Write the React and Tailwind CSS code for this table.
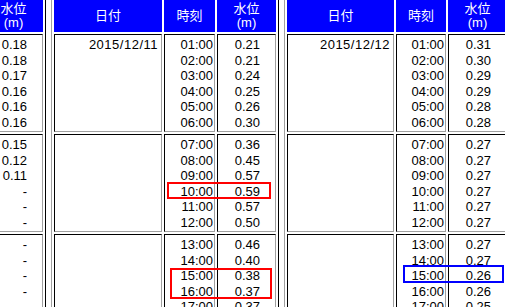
import React from "react";

// 水位データ（1時間ごと、6時間単位でまとめる）
const day11 = [
  [["01:00", "0.21"], ["02:00", "0.21"], ["03:00", "0.24"], ["04:00", "0.25"], ["05:00", "0.26"], ["06:00", "0.30"]],
  [["07:00", "0.36"], ["08:00", "0.45"], ["09:00", "0.57"], ["10:00", "0.59"], ["11:00", "0.57"], ["12:00", "0.50"]],
  [["13:00", "0.46"], ["14:00", "0.40"], ["15:00", "0.38"], ["16:00", "0.37"], ["17:00", "0.37"], ["18:00", "0.36"]],
];

const day12 = [
  [["01:00", "0.31"], ["02:00", "0.30"], ["03:00", "0.29"], ["04:00", "0.29"], ["05:00", "0.28"], ["06:00", "0.28"]],
  [["07:00", "0.27"], ["08:00", "0.27"], ["09:00", "0.27"], ["10:00", "0.27"], ["11:00", "0.27"], ["12:00", "0.27"]],
  [["13:00", "0.27"], ["14:00", "0.27"], ["15:00", "0.26"], ["16:00", "0.26"], ["17:00", "0.25"], ["18:00", "0.25"]],
];

const day10 = [
  ["0.18", "0.18", "0.17", "0.16", "0.16", "0.16"],
  ["0.15", "0.12", "0.11", "-", "-", "-"],
  ["-", "-", "-", "-", "-", "-"],
];

const tableCls =
  "table-fixed border-separate border-spacing-[2px] border border-t-[#a0a0a0] border-l-[#a0a0a0] border-r-black border-b-black";
const thCls =
  "bg-[#0000ff] border border-[#0000ff] text-white font-normal text-center align-middle py-[1px] px-0 leading-[14px]";
const tdCls =
  "border border-t-black border-l-black border-r-[#a0a0a0] border-b-[#a0a0a0] align-top pt-[2px] pb-[1px] px-0";

const Lines = ({ items }) =>
  items.map((t, i) => (
    <div key={i} className="h-[15.5px] leading-[15.5px] whitespace-nowrap">
      {t}
    </div>
  ));

const LevelHead = () => (
  <>
    <div>水位</div>
    <div>(m)</div>
  </>
);

function DayTable({ date, groups, dateW, timeW, levelW }) {
  return (
    <table className={tableCls} style={{ width: dateW + timeW + levelW + 10 }}>
      <thead>
        <tr>
          <th className={thCls} style={{ width: dateW }}>日付</th>
          <th className={thCls} style={{ width: timeW }}>時刻</th>
          <th className={thCls} style={{ width: levelW }}>
            <LevelHead />
          </th>
        </tr>
      </thead>
      <tbody>
        {groups.map((g, i) => (
          <tr key={i}>
            <td className={tdCls + " text-right pr-[3px] tracking-[0.5px]"}>
              {i === 0 && <Lines items={[date]} />}
            </td>
            <td className={tdCls + " text-right pr-[1px]"}>
              <Lines items={g.map((r) => r[0])} />
            </td>
            <td className={tdCls + " text-right pr-[15px]"}>
              <Lines items={g.map((r) => r[1])} />
            </td>
          </tr>
        ))}
      </tbody>
    </table>
  );
}

function LevelOnlyTable({ groups }) {
  return (
    <table className={tableCls + " w-[65px]"}>
      <thead>
        <tr>
          <th className={thCls + " w-[59px]"}>
            <LevelHead />
          </th>
        </tr>
      </thead>
      <tbody>
        {groups.map((g, i) => (
          <tr key={i}>
            <td className={tdCls + " text-right pr-[15px]"}>
              <Lines items={g} />
            </td>
          </tr>
        ))}
      </tbody>
    </table>
  );
}

export default function App() {
  return (
    <div className="relative w-[505px] h-[307px] overflow-hidden bg-white text-black text-[13px] font-['Liberation_Sans','Noto_Sans_CJK_JP',sans-serif]">
      <div className="flex items-start gap-[5px] -ml-[19px] -mt-[3px]">
        <LevelOnlyTable groups={day10} />
        <DayTable date="2015/12/11" groups={day11} dateW={108} timeW={51} levelW={59} />
        <DayTable date="2015/12/12" groups={day12} dateW={107} timeW={50} levelW={59} />
      </div>

      {/* 注目箇所の枠 */}
      <div className="absolute left-[167px] top-[182px] w-[104px] h-[17px] border-2 border-[#ff0000]" />
      <div className="absolute left-[170px] top-[268px] w-[102px] h-[31px] border-2 border-[#ff0000]" />
      <div className="absolute left-[403px] top-[265px] w-[101px] h-[18px] border-2 border-[#0000ff]" />
    </div>
  );
}
